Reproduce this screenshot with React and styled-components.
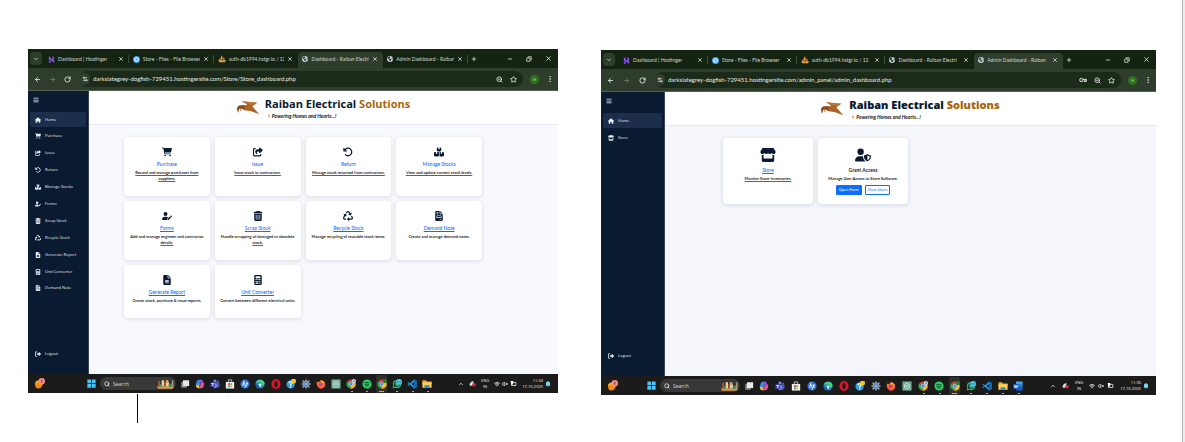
import React from "react";
import styled, { createGlobalStyle, css } from "styled-components";
import {
  FaHouse, FaCartShopping, FaShareFromSquare, FaArrowRotateLeft, FaBoxesStacked, FaUserPen,
  FaTrashCan, FaRecycle, FaFileLines, FaCalculator, FaFileInvoice, FaRightFromBracket,
  FaBars, FaStore, FaUserShield, FaEarthAmericas,
} from "react-icons/fa6";
import {
  ChevronDown, ChevronUp, ArrowLeft, ArrowRight, RotateCw, X, Plus, Minus, Search, Star,
  EllipsisVertical, Wifi, VolumeX, Settings2, ZoomOut,
} from "lucide-react";

const GlobalStyle = createGlobalStyle`
  * { box-sizing: border-box; }
  body { margin: 0; background: #fff; }
  button, input { font-family: inherit; border: 0; padding: 0; background: none; color: inherit; }
  ul { list-style: none; margin: 0; padding: 0; }
  svg { display: block; flex: none; }
  a { color: inherit; text-decoration: none; }
`;

const ui = `"Open Sans", "Noto Sans", sans-serif`;
const compact = `Lato, "Open Sans", sans-serif`;

const Document = styled.div`
  display: flex;
  min-height: 100vh;
  font-family: ${ui};
`;
const Sheet = styled.main`
  flex: 1;
  min-width: 0;
  display: flex;
  gap: 43px;
  padding: 49px 26px 19px 28px;
`;
const SheetEdge = styled.div`
  width: 3px;
  background: #ededed;
  border-left: 1px solid #bdbdbd;
`;
const Column = styled.div`
  flex: ${(p) => p.$grow} 1 0;
  min-width: 0;
  padding-top: ${(p) => p.$top || 0}px;
`;
const TextCursor = styled.div`
  width: 1px;
  height: 29px;
  margin: 1px 0 0 109px;
  background: #000;
`;

/* Browser window */
const Window = styled.section`
  display: flex;
  flex-direction: column;
  background: #152313;
  color: #dfe5dc;
`;
const TabStrip = styled.div`
  display: flex;
  align-items: center;
  height: 19px;
`;
const TabMenu = styled.button`
  display: grid;
  place-items: center;
  flex: none;
  width: 12px;
  height: 13px;
  margin: 0 ${(p) => (p.$wide ? 4 : 2)}px 0 2px;
  border-radius: 4px;
  background: #2f3e2c;
`;
const TabList = styled.div`
  flex: 0 0 80%;
  min-width: 0;
  display: flex;
  align-self: stretch;
`;
const Tab = styled.div`
  flex: 1 1 0;
  min-width: 0;
  display: flex;
  align-items: center;
  gap: 3px;
  margin-top: 3px;
  padding: 0 5px 2px 4px;
  border-radius: 4px 4px 0 0;
  position: relative;
  ${(p) => p.$active && css`background: #2f3e2c;`}
  ${(p) => p.$divider && css`
    &::after {
      content: "";
      position: absolute;
      right: 0;
      top: 3px;
      height: 8px;
      width: 1px;
      background: #3d4d39;
    }
  `}
`;
const TabTitle = styled.button`
  flex: 1;
  min-width: 0;
  overflow: hidden;
  white-space: nowrap;
  text-align: left;
  font-family: ${compact};
  font-size: 5px;
  line-height: 8px;
  color: #cdd5ca;
`;
const IconButton = styled.button`
  display: grid;
  place-items: center;
  flex: none;
  width: ${(p) => p.$w || 8}px;
  height: 9px;
`;
const WindowButtons = styled.div`
  display: flex;
  gap: 11px;
  margin-left: auto;
  padding-right: 6px;
`;
const Toolbar = styled.div`
  display: flex;
  align-items: center;
  height: 23px;
  padding: 0 5px;
  background: #2f3e2c;
  border-bottom: 1px solid #53604f;
`;
const NavButtons = styled.div`
  display: flex;
  gap: ${(p) => (p.$wide ? 7 : 6)}px;
  margin-right: 8px;
`;
const AddressBar = styled.div`
  flex: 1;
  min-width: 0;
  display: flex;
  align-items: center;
  gap: 3px;
  height: 16px;
  padding: 0 6px 0 0;
  border-radius: 8px;
  background: #1c2a1a;
`;
const SiteInfo = styled.button`
  display: grid;
  place-items: center;
  width: 10px;
  height: 12px;
  border-radius: 5px;
  background: #2f3e2c;
`;
const Address = styled.input`
  flex: 1;
  min-width: 0;
  height: 12px;
  font-family: ${compact};
  font-size: 6px;
  line-height: 12px;
  color: #e4eae1;
  outline: 0;
`;
const AddressActions = styled.div`
  display: flex;
  gap: 6px;
`;
const Profile = styled.button`
  width: 9px;
  height: 9px;
  margin: 0 7px;
  border-radius: 5px;
  background: #2c741b;
  font-size: 4px;
  line-height: 9px;
  text-align: center;
`;

/* Web application */
const AppFrame = styled.div`
  display: flex;
  height: ${(p) => p.$height}px;
`;
const Sidebar = styled.nav`
  width: ${(p) => p.$w}px;
  display: flex;
  flex-direction: column;
  padding: 5px 2px 13px 2px;
  background: #0a1a30;
  border-right: 1px solid #34425a;
  color: #e9edf4;
`;
const MenuButton = styled.button`
  display: block;
  width: 8px;
  height: 8px;
  margin: 0 0 8px 3px;
`;
const SideList = styled.ul`
  display: flex;
  flex-direction: column;
  justify-content: space-between;
  height: ${(p) => p.$height}px;
`;
const SideLink = styled.a`
  display: flex;
  align-items: center;
  gap: 4px;
  height: 15px;
  padding: 0 5px;
  border-radius: 2px;
  font-size: 4px;
  line-height: 6px;
  white-space: nowrap;
  background: ${(p) => (p.$active ? "#1c2e4c" : "transparent")};
`;
const SideFoot = styled.div`
  margin-top: auto;
`;
const Main = styled.div`
  flex: 1;
  min-width: 0;
  background: ${(p) => p.$bg};
`;
const Banner = styled.header`
  display: flex;
  justify-content: center;
  align-items: flex-start;
  gap: 4px;
  height: 34px;
  padding-top: 5px;
  background: #fff;
  border-bottom: 1px solid #e6e8ee;
  color: #0a1a30;
`;
const Company = styled.h1`
  margin: 0;
  font-size: 11px;
  line-height: 16px;
  font-weight: ${(p) => p.$weight};
  white-space: nowrap;
  color: #0a1a30;
  span { color: #a9660f; }
`;
const Tagline = styled.p`
  display: flex;
  align-items: center;
  gap: 2px;
  margin: 0 0 0 3px;
  font-family: ${compact};
  font-size: 5px;
  line-height: 8px;
  font-weight: 700;
  font-style: italic;
  color: #111;
`;
const CardGrid = styled.div`
  display: grid;
  grid-template-columns: repeat(${(p) => p.$cols}, 1fr);
  gap: 5px;
  padding: 12px ${(p) => p.$right}px 0 ${(p) => p.$left}px;
`;
const Card = styled.article`
  display: flex;
  flex-direction: column;
  align-items: center;
  padding: ${(p) => (p.$large ? "9px 4px 9px" : "10px 4px 14px")};
  border-radius: 4px;
  background: #fff;
  box-shadow: 0 1px 4px rgba(10, 26, 48, 0.14);
  color: #0a1a30;
  font-family: ${compact};
  text-align: center;
`;
const CardTitle = styled.h2`
  margin: 3px 0 2px;
  font-size: 5px;
  line-height: 8px;
  font-weight: ${(p) => (p.$plain ? 700 : 500)};
  color: ${(p) => (p.$plain ? "#212529" : "#0d6efd")};
  text-decoration: ${(p) => (p.$underlined ? "underline" : "none")};
`;
const CardText = styled.p`
  margin: 0;
  font-size: 4px;
  line-height: 6px;
  font-weight: 700;
  color: #212529;
`;
const Underlined = styled.span`
  text-decoration: underline #0d6efd;
`;
const ButtonRow = styled.div`
  display: flex;
  gap: 3px;
  margin-top: 3px;
`;
const CardButton = styled.button`
  height: 10px;
  padding: 0 2px;
  border: 1px solid #0d6efd;
  border-radius: 1px;
  font-size: 4px;
  line-height: 8px;
  background: ${(p) => (p.$filled ? "#0d6efd" : "#fff")};
  color: ${(p) => (p.$filled ? "#fff" : "#0d6efd")};
`;

/* Desktop taskbar */
const Taskbar = styled.footer`
  display: flex;
  align-items: center;
  height: 19px;
  padding: 0 7px 0 6px;
  background: #1b1b1b;
  color: #eee;
`;
const Launcher = styled.button`
  display: grid;
  place-items: center;
  width: 11px;
  height: 18px;
  border-radius: 2px;
  position: relative;
  background: ${(p) => (p.$state === "active" ? "#303030" : "transparent")};
  ${(p) => p.$state && css`
    &::after {
      content: "";
      position: absolute;
      bottom: 1px;
      left: ${p.$state === "active" ? 3 : 5}px;
      right: ${p.$state === "active" ? 3 : 4}px;
      height: 1px;
      background: ${p.$state === "active" ? "#5cc0f5" : "#a5a5a5"};
    }
  `}
`;
const SearchBox = styled.label`
  display: flex;
  align-items: center;
  gap: 3px;
  width: ${(p) => p.$w}px;
  height: 13px;
  margin: 0 3px;
  padding: 0 2px 0 4px;
  border-radius: 7px;
  background: #383838;
  input {
    flex: 1;
    min-width: 0;
    font-size: 5px;
    outline: 0;
  }
  input::placeholder { color: #dcdcdc; opacity: 1; }
`;
const Launchers = styled.div`
  flex: 1;
  display: flex;
  justify-content: space-between;
`;
const Tray = styled.div`
  display: flex;
  align-items: center;
  gap: ${(p) => (p.$wide ? 6 : 5)}px;
  margin-left: ${(p) => (p.$wide ? 26 : 25)}px;
`;
const TrayGroup = styled.div`
  display: flex;
  align-items: center;
  gap: ${(p) => (p.$wide ? 3 : 2)}px;
`;
const TrayText = styled.div`
  font-size: 4px;
  line-height: 6px;
  text-align: ${(p) => p.$align || "center"};
  white-space: nowrap;
`;
const Spacer = styled.span`
  width: ${(p) => p.$w}px;
`;

const Svg = ({ s = 11, children }) => (
  <svg width={s} height={s} viewBox="0 0 24 24" fill="none" aria-hidden="true">{children}</svg>
);

const Favicon = ({ kind }) => {
  if (kind === "hostinger")
    return <Svg s={7}><path fill="#8a52f0" d="M3 1l6 3v6h6l6 4H3zM15 1l6 3v8l-6-3zM3 23v-8l6 3v5zM21 23l-6-3v-4H9l-5-3h17z" /></Svg>;
  if (kind === "files")
    return <Svg s={7}><circle cx="12" cy="12" r="12" fill="#3aa0ee" /><circle cx="12" cy="12" r="8" fill="#e8f5ff" /><circle cx="12" cy="12" r="4" fill="#4ba9ee" /></Svg>;
  if (kind === "pma")
    return <Svg s={8}><path fill="#f59a25" d="M10 1c5 4 4 9 3 13H5c3-4 5-8 5-13zM16 6c4 3 4 6 4 8h-5c1-3 2-5 1-8z" /><path fill="#e9a34a" d="M0 16h24l-3 6H4z" /><path fill="#7b88b8" d="M8 8L2 15h5z" /></Svg>;
  return <FaEarthAmericas size={6} color="#c3cbd6" />;
};

const tabs = [
  ["hostinger", "Dashboard | Hostinger"],
  ["files", "Store - Files - File Browser"],
  ["pma", "auth-db1994.hstgr.io / 12"],
  ["globe", "Dashboard - Raiban Electri"],
  ["globe", "Admin Dashboard - Raiban"],
];

const BirdLogo = () => (
  <svg width="24" height="19" viewBox="0 0 72 57" aria-hidden="true">
    <path fill="#ad6428" d="M14 16L61 20L46 31L51 37L67 55L40 45L22 43L12 37L6 38L3 50L0 36L5 29L18 28L28 28L30 25Z" />
    <path fill="#8c4a19" d="M0 36L5 29L18 28L25 31L21 40L12 37L6 38L3 50Z" />
    <path fill="#bd763a" d="M14 16L42 26L61 20Z" />
    <path stroke="#8c4a19" strokeWidth="2" fill="none" d="M10 37L12 46" />
  </svg>
);
const Bolt = () => (
  <svg width="2" height="6" viewBox="0 0 6 18" aria-hidden="true"><path fill="#f26a1b" d="M4 0L0 10h3L1 18l5-11H3z" /></svg>
);

const ChromeMark = () => (
  <>
    <path fill="#e94335" d="M12 12L3 6a11 11 0 0 1 19 1H12z" />
    <path fill="#34a853" d="M12 12l-2 11A11 11 0 0 1 3 6z" />
    <path fill="#fbbc05" d="M12 12l10-5a11 11 0 0 1-12 16z" />
    <circle cx="12" cy="12" r="5" fill="#fff" /><circle cx="12" cy="12" r="4" fill="#4285f4" />
  </>
);
const drawings = {
  weather: <><path fill="#f08a0c" d="M2 12c0-4 4-7 8-7 6 0 10 4 9 9s-5 9-10 9-7-5-7-11z" /><path fill="#ffc23d" d="M3 12c1-4 5-6 8-5-3 2-5 5-8 5z" /><circle cx="17" cy="7" r="7" fill="#ef8d8d" /><path stroke="#7a1f1f" strokeWidth="2" d="M17 4v6" /></>,
  start: <path fill="#4cc2f5" d="M1 1h10v10H1zM13 1h10v10H13zM1 13h10v10H1zM13 13h10v10H13z" />,
  views: <><path fill="#858585" d="M3 7h13v14H3z" /><path fill="#e8e8e8" d="M7 3h15v14H7z" /></>,
  copilot: <><path fill="#2f87e8" d="M7 2h9l-3 10-4 7-7-3c0-5 2-13 5-14z" /><path fill="#f0b72c" d="M2 15l7-2 3 9H7c-3 0-5-3-5-7z" /><path fill="#e04f9f" d="M17 7c4 0 6 2 5 6-1 5-3 9-6 9h-6l4-11z" /><path fill="#8f53e0" d="M12 2h4c2 0 3 2 3 5l-6 2z" /></>,
  teams: <><circle cx="12" cy="5" r="4" fill="#7b83eb" /><circle cx="19" cy="7" r="3" fill="#5059c9" /><path fill="#5059c9" d="M14 10h9v7l-5 5-4-2z" /><path fill="#7b83eb" d="M7 10h10v8l-5 5-5-4z" /><path fill="#4049ad" d="M1 8h11v11H1z" /><path fill="#fff" d="M3 10h7v2H8v5H6v-5H3z" /></>,
  store: <><path fill="#eeeff1" d="M2 7h20v16H2z" /><path stroke="#b8d8e8" strokeWidth="2" d="M8 7V2h8v5" /><path fill="#ed4b2b" d="M7 10h5v5H7z" /><path fill="#7db92c" d="M13 10h4v5h-4z" /><path fill="#1ba1e2" d="M7 16h5v4H7z" /><path fill="#f9b915" d="M13 16h4v4h-4z" /></>,
  hp: <><circle cx="12" cy="12" r="11" fill="#2d72d8" /><path stroke="#fff" strokeWidth="2" d="M10 3L6 16M8 9h3l-2 7M16 9l-4 12M15 9h3l-2 7h-3" /></>,
  edge: <><circle cx="12" cy="12" r="11" fill="#1389d4" /><path fill="#4bd07a" d="M2 9C6-1 22 0 23 11c0 5-6 5-8 3 2-4-5-8-13-5z" /><circle cx="11" cy="15" r="4" fill="#d9effa" /><path fill="#235c88" d="M2 14h8v8H4z" /></>,
  opera: <><ellipse cx="12" cy="12" rx="11" ry="12" fill="#e5142c" /><ellipse cx="12" cy="12" rx="4" ry="8" fill="#1b1b1b" /></>,
  help: <><circle cx="11" cy="13" r="10" fill="#2a9fdf" /><path stroke="#fff" strokeWidth="3" d="M7 10c0-5 8-4 7 0l-3 4v2M11 18v3" /><circle cx="18" cy="5" r="6" fill="#fcc419" /></>,
  gear: <><path stroke="#93a2b3" strokeWidth="4" d="M12 1v22M1 12h22M4 4l16 16M20 4L4 20" /><circle cx="12" cy="12" r="8" fill="#8496aa" /><circle cx="12" cy="12" r="4" fill="#2580ca" /><circle cx="12" cy="12" r="2" fill="#fff" /></>,
  firefox: <><path fill="#ff6a24" d="M2 6l5 2 5-6c1 3 9 4 10 11 0 6-5 10-10 10S0 17 2 6z" /><path fill="#e22e69" d="M3 14c3 8 13 10 17 4-2 5-6 6-9 5-4 0-7-4-8-9z" /><circle cx="11" cy="13" r="4" fill="#8a4bd1" /><path fill="#ffd23e" d="M12 2c3 2 9 4 10 10-2-3-5-4-7-4z" /></>,
  gpt: <><path fill="#74a99a" d="M1 1h22v22H1z" /><path stroke="#d3e9e1" strokeWidth="2" d="M12 5l6 4v7l-6 4-6-4V9zM9 10l6 4M15 10l-6 4" /></>,
  chrome: <><ChromeMark /><circle cx="19" cy="5" r="5" fill="#d6e2f2" /><circle cx="19" cy="5" r="2" fill="#4b6380" /></>,
  spotify: <><circle cx="12" cy="12" r="11" fill="#1ed760" /><path stroke="#16351f" strokeWidth="2" d="M5 9c5-2 10-1 14 1M6 13c4-1 8-1 11 1M7 17c3-1 6-1 9 1" /></>,
  chromeActive: <><ChromeMark /><circle cx="19" cy="5" r="5" fill="#2e7d20" /></>,
  whatsapp: <><path fill="#22c55e" d="M1 23l2-7C-1 7 7 1 14 3c9 3 10 14 3 18-4 2-7 1-10 0z" /><path fill="#153a25" d="M4 20l1-4c-3-6 2-11 8-10 7 1 8 9 3 12-3 2-6 1-8 0z" /><path stroke="#22c55e" strokeWidth="3" d="M8 9c1 4 4 7 8 7" /><circle cx="17" cy="7" r="7" fill="#55c4f3" /><path stroke="#155d82" strokeWidth="2" d="M12 7h4M18 7h4" /></>,
  vscode: <><path fill="#2196e3" d="M17 1l6 3v16l-6 3L7 14l-4 3-2-2 4-3-4-3 2-2 4 3zM17 7l-6 5 6 5z" /><path fill="#0a6cb5" d="M17 1l6 3v16l-6 3z" /></>,
  folder: <><path fill="#e9a825" d="M1 3h8l3 3h11v6H1z" /><path fill="#ffd158" d="M1 8h22v13H1z" /><path fill="#2b86d6" d="M6 15h12v6H6z" /></>,
  word: <><path fill="#41a5ee" d="M7 1h16v8H7z" /><path fill="#2b7cd3" d="M7 8h16v8H7z" /><path fill="#185abd" d="M7 15h16v8H7zM1 7h12v12H1z" /><path stroke="#fff" strokeWidth="2" d="M3 10l2 6 2-5 2 5 2-6" /></>,
};
const launcherNames = [
  ["views"], ["copilot"], ["teams"], ["store"], ["hp"], ["edge"], ["opera"], ["help"], ["gear"], ["firefox"],
  ["gpt"], ["chrome", "open"], ["spotify", "open"], ["chromeActive", "active"], ["whatsapp", "open"],
  ["vscode", "open"], ["folder", "open"],
];

const Skyline = () => (
  <svg width="17" height="10" viewBox="0 0 51 30" aria-hidden="true">
    <path fill="#d99a55" d="M0 22h51l-4 7H3z" />
    <path fill="#b9552e" d="M4 6h5v17H4zM20 9h3v13h-3zM42 12h4v10h-4z" />
    <path fill="#f0cf95" d="M14 4h7v18h-7zM26 10h10v12H26z" />
    <path fill="#4b8668" d="M9 15h5v8H9zM35 15h7v8h-7z" />
    <circle cx="30" cy="7" r="4" fill="#dca262" />
    <path fill="#d9cba5" d="M46 4h3v18h-3z" />
  </svg>
);

function DesktopBar({ gap, searchWidth, time, wide }) {
  const items = wide ? [...launcherNames, ["word", "open"]] : launcherNames;
  return (
    <Taskbar>
      <Launcher aria-label="Weather"><Svg>{drawings.weather}</Svg></Launcher>
      <Spacer $w={gap} />
      <Launcher aria-label="Start"><Svg s={9}>{drawings.start}</Svg></Launcher>
      <SearchBox $w={searchWidth}>
        <Search size={6} strokeWidth={3} />
        <input placeholder="Search" aria-label="Search" />
        <Skyline />
      </SearchBox>
      <Launchers>
        {items.map(([name, state]) => (
          <Launcher key={name} $state={state} aria-label={name}><Svg s={10}>{drawings[name]}</Svg></Launcher>
        ))}
      </Launchers>
      <Tray $wide={wide}>
        <ChevronUp size={6} strokeWidth={3} />
        <Svg s={7}><path fill="#ddd" d="M2 16C2 9 8 4 15 3v8l-4 9H3z" /><circle cx="17" cy="16" r="6" fill="#e02b3c" /></Svg>
        <TrayText>ENG<br />IN</TrayText>
        <TrayGroup $wide={wide}>
          <Wifi size={6} strokeWidth={3} />
          <VolumeX size={6} strokeWidth={3} />
          <Svg s={7}><path stroke="#ddd" strokeWidth="3" d="M5 8h15v11H5z" /><path fill="#fff" d="M2 3h9v12H5z" /></Svg>
        </TrayGroup>
        <TrayGroup>
          <TrayText $align="right">{time}<br />17-10-2025</TrayText>
          <Svg s={6}><path fill="#7fd6f5" d="M12 1c5 0 8 4 8 9v6l2 3H2l2-3v-6c0-5 3-9 8-9zM9 20h6l-3 3z" /></Svg>
        </TrayGroup>
      </Tray>
    </Taskbar>
  );
}

function BrowserChrome({ active, url, wide }) {
  return (
    <>
      <TabStrip>
        <TabMenu $wide={wide} aria-label="Search tabs"><ChevronDown size={6} strokeWidth={3} /></TabMenu>
        <TabList>
          {tabs.map(([kind, title], i) => (
            <Tab key={title} $active={i === active} $divider={i !== active && i !== active - 1}>
              <Favicon kind={kind} />
              <TabTitle>{title}</TabTitle>
              <IconButton $w={6} aria-label="Close tab"><X size={6} strokeWidth={3} /></IconButton>
            </Tab>
          ))}
        </TabList>
        <IconButton $w={11} aria-label="New tab"><Plus size={6} strokeWidth={3} /></IconButton>
        <WindowButtons>
          <IconButton aria-label="Minimize"><Minus size={6} strokeWidth={3} /></IconButton>
          <IconButton aria-label="Restore"><Svg s={6}><path stroke="currentColor" strokeWidth="3" d="M3 8h13v13H3zM8 7V3h13v13h-4" /></Svg></IconButton>
          <IconButton aria-label="Close"><X size={7} strokeWidth={3} /></IconButton>
        </WindowButtons>
      </TabStrip>
      <Toolbar>
        <NavButtons $wide={wide}>
          <IconButton $w={9} aria-label="Back"><ArrowLeft size={7} strokeWidth={3} /></IconButton>
          <IconButton $w={9} aria-label="Forward"><ArrowRight size={7} color="#8a9686" /></IconButton>
          <IconButton $w={9} aria-label="Reload"><RotateCw size={7} strokeWidth={3} /></IconButton>
        </NavButtons>
        <AddressBar>
          <SiteInfo aria-label="Site information"><Settings2 size={6} strokeWidth={3} /></SiteInfo>
          <Address aria-label="Address" defaultValue={url} />
          <AddressActions>
            {wide && <IconButton aria-label="Passwords"><Svg s={8}><circle cx="7" cy="12" r="5" stroke="currentColor" strokeWidth="3" /><path stroke="currentColor" strokeWidth="3" d="M12 10h11M14 16h8v-5M18 10v6" /></Svg></IconButton>}
            <IconButton aria-label="Zoom"><ZoomOut size={7} strokeWidth={3} /></IconButton>
            <IconButton aria-label="Bookmark"><Star size={7} strokeWidth={3} /></IconButton>
          </AddressActions>
        </AddressBar>
        <Profile aria-label="Profile">H</Profile>
        <IconButton $w={7} aria-label="Menu"><EllipsisVertical size={8} strokeWidth={2} /></IconButton>
      </Toolbar>
    </>
  );
}

function SideMenu({ width, items, listHeight }) {
  return (
    <Sidebar $w={width}>
      <MenuButton aria-label="Toggle menu"><FaBars size={6} /></MenuButton>
      <SideList $height={listHeight}>
        {items.map(([Icon, label], i) => (
          <li key={label}><SideLink href="#" $active={i === 0}><Icon size={6} />{label}</SideLink></li>
        ))}
      </SideList>
      <SideFoot><SideLink href="#"><FaRightFromBracket size={6} />Logout</SideLink></SideFoot>
    </Sidebar>
  );
}

function CompanyBanner({ weight }) {
  return (
    <Banner>
      <BirdLogo />
      <div>
        <Company $weight={weight}>Raiban Electrical <span>Solutions</span></Company>
        <Tagline><Bolt />Powering Homes and Hearts...!</Tagline>
      </div>
    </Banner>
  );
}

const storeMenu = [
  [FaHouse, "Home"], [FaCartShopping, "Purchase"], [FaShareFromSquare, "Issue"], [FaArrowRotateLeft, "Return"],
  [FaBoxesStacked, "Manage Stocks"], [FaUserPen, "Forms"], [FaTrashCan, "Scrap Stock"], [FaRecycle, "Recycle Stock"],
  [FaFileLines, "Generate Report"], [FaCalculator, "Unit Converter"], [FaFileInvoice, "Demand Note"],
];
const adminMenu = [[FaHouse, "Home"], [FaStore, "Store"]];

/* icon, title, plain text, underlined text, title underlined */
const storeCards = [
  [FaCartShopping, "Purchase", "", "Record and manage purchases from suppliers.", false],
  [FaShareFromSquare, "Issue", "", "Issue stock to contractors.", false],
  [FaArrowRotateLeft, "Return", "", "Manage stock returned from contractors.", false],
  [FaBoxesStacked, "Manage Stocks", "", "View and update current stock levels.", false],
  [FaUserPen, "Forms", "Add and manage engineer and contractor ", "details.", true],
  [FaTrashCan, "Scrap Stock", "Handle scrapping of damaged or obsolete ", "stock.", true],
  [FaRecycle, "Recycle Stock", "Manage recycling of reusable stock items.", "", true],
  [FaFileInvoice, "Demand Note", "Create and manage demand notes.", "", true],
  [FaFileLines, "Generate Report", "Create stock, purchase & issue reports.", "", true],
  [FaCalculator, "Unit Converter", "Convert between different electrical units.", "", true],
];

export default function App() {
  return (
    <>
      <GlobalStyle />
      <Document>
        <Sheet>
          <Column $grow={530}>
            <Window>
              <BrowserChrome active={3} url="darkslategrey-dogfish-729451.hostingersite.com/Store/Store_dashboard.php" />
              <AppFrame $height={283}>
                <SideMenu width={61} items={storeMenu} listHeight={184} />
                <Main $bg="#f8f9fe">
                  <CompanyBanner weight={700} />
                  <CardGrid $cols={4} $left={35} $right={76}>
                    {storeCards.map(([Icon, title, text, linked, underlined]) => (
                      <Card key={title}>
                        <Icon size={10} />
                        <CardTitle $underlined={underlined}><a href="#">{title}</a></CardTitle>
                        <CardText>{text}{linked && <Underlined>{linked}</Underlined>}</CardText>
                      </Card>
                    ))}
                  </CardGrid>
                </Main>
              </AppFrame>
              <DesktopBar gap={41} searchWidth={76} time="11:34" />
            </Window>
            <TextCursor />
          </Column>
          <Column $grow={555} $top={1}>
            <Window>
              <BrowserChrome active={4} wide url="darkslategrey-dogfish-729451.hostingersite.com/admin_panel/admin_dashboard.php" />
              <AppFrame $height={284}>
                <SideMenu width={64} items={adminMenu} listHeight={32} />
                <Main $bg="#f4f6fb">
                  <CompanyBanner weight={800} />
                  <CardGrid $cols={2} $left={58} $right={248}>
                    <Card $large>
                      <FaStore size={16} />
                      <CardTitle $underlined><a href="#">Store</a></CardTitle>
                      <CardText><Underlined>Monitor Store Inventories.</Underlined></CardText>
                    </Card>
                    <Card $large>
                      <FaUserShield size={16} />
                      <CardTitle $plain>Grant Access</CardTitle>
                      <CardText>Manage User Access to Store Software.</CardText>
                      <ButtonRow>
                        <CardButton $filled>Open Form</CardButton>
                        <CardButton>View Users</CardButton>
                      </ButtonRow>
                    </Card>
                  </CardGrid>
                </Main>
              </AppFrame>
              <DesktopBar gap={28} searchWidth={80} time="11:36" wide />
            </Window>
          </Column>
        </Sheet>
        <SheetEdge />
      </Document>
    </>
  );
}
